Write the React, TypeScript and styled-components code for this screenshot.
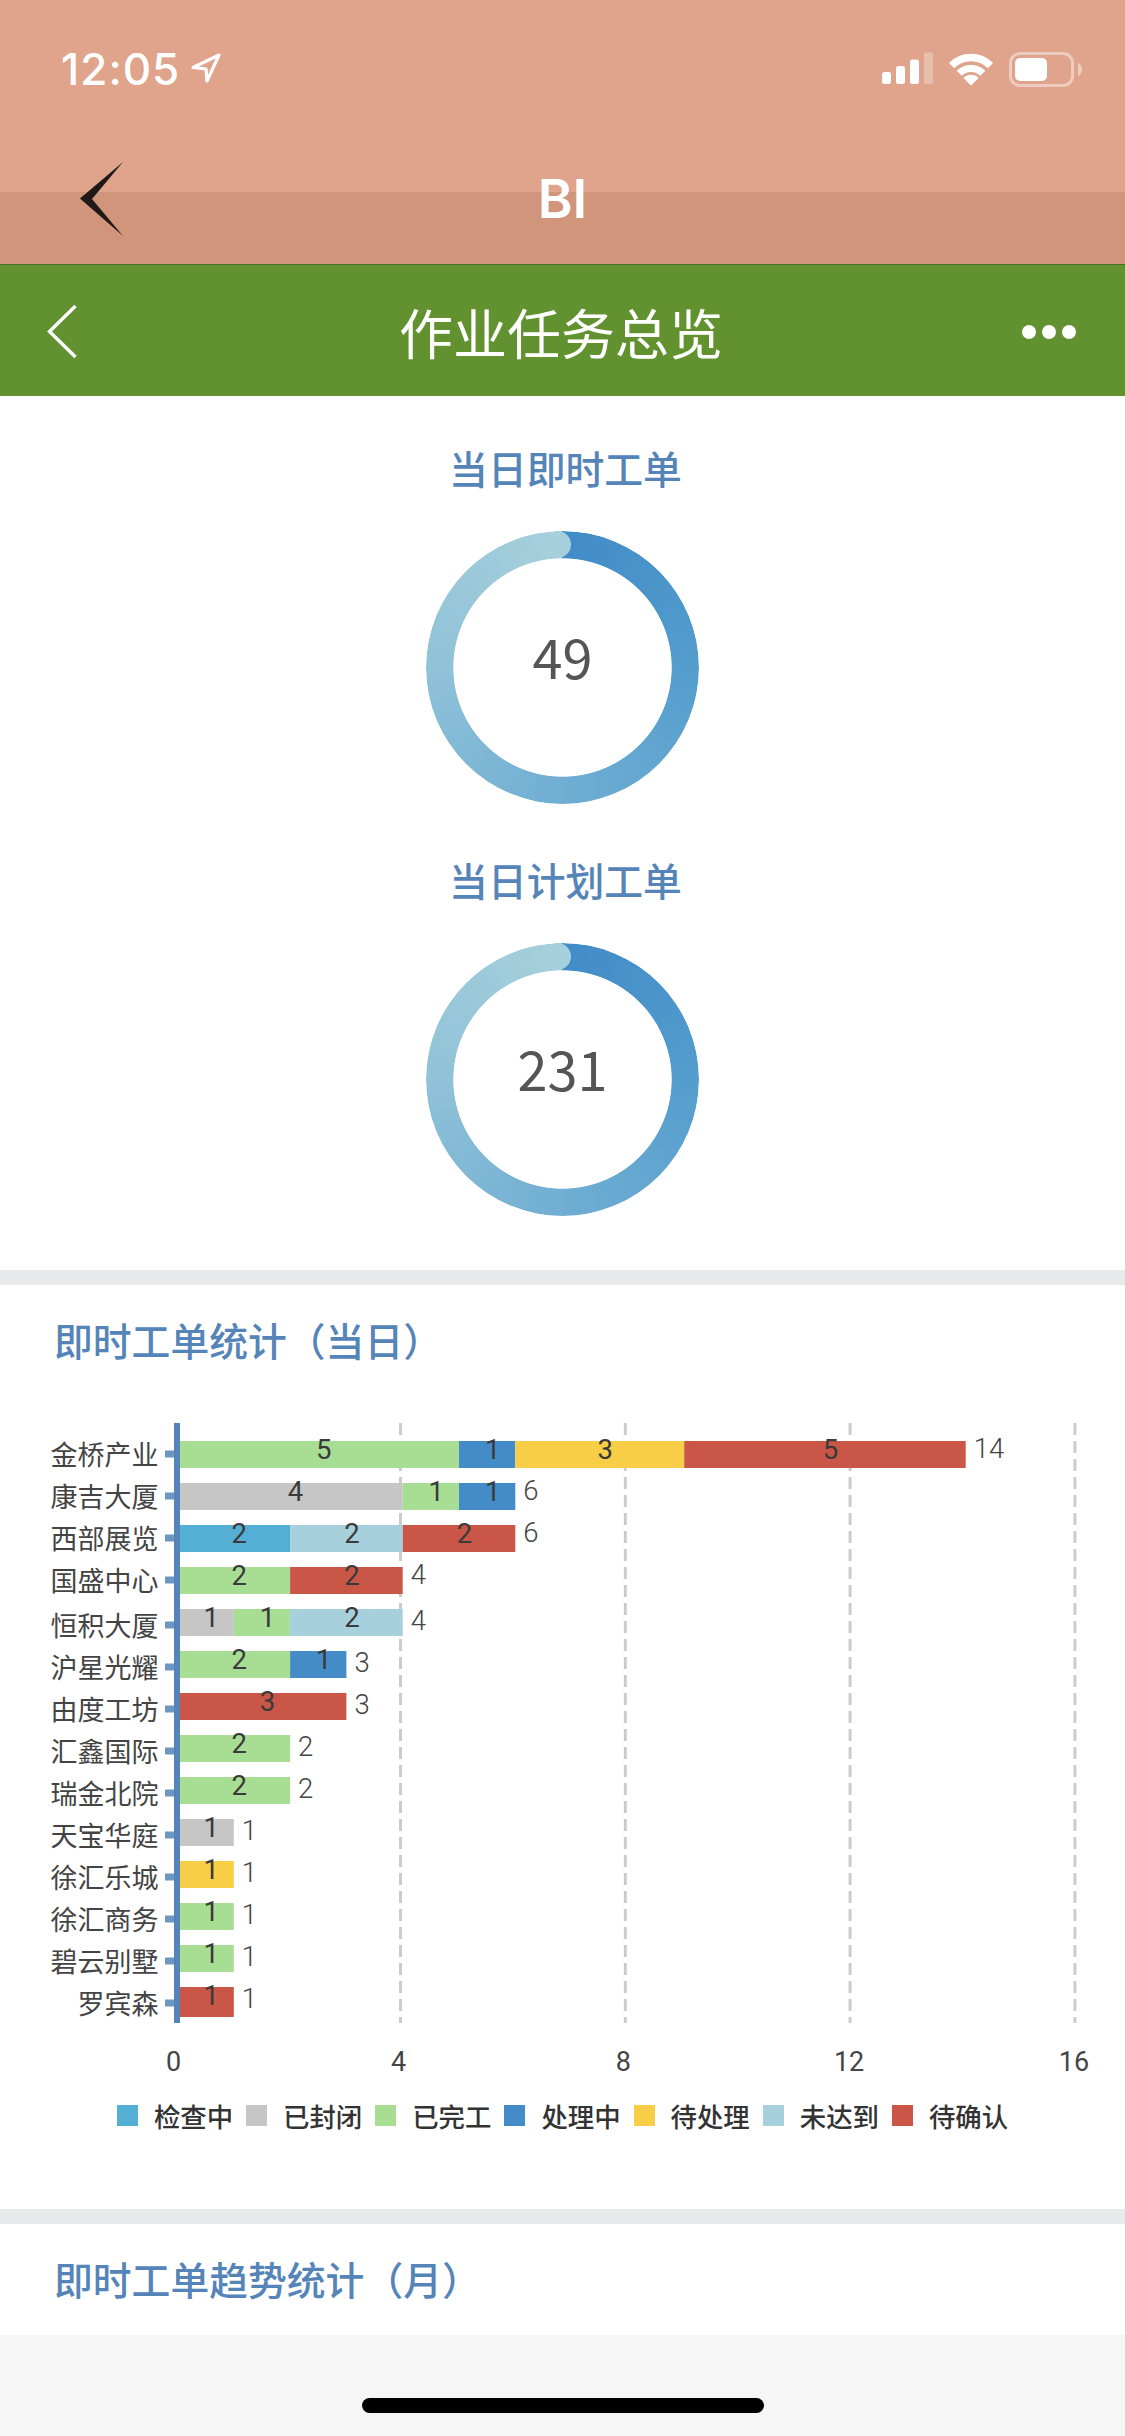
import React from 'react';
import styled, { createGlobalStyle } from 'styled-components';

const CJK = `"Noto Sans CJK SC", "Noto Sans", sans-serif`;
const LATIN = `Roboto, "Liberation Sans", sans-serif`;

const GlobalStyle = createGlobalStyle`
  html, body {
    margin: 0;
    padding: 0;
    background: #f6f6f6;
  }
  * {
    box-sizing: border-box;
  }
`;

const COLORS: Record<string, string> = {
  检查中: '#55aed4',
  已封闭: '#c6c6c6',
  已完工: '#a8de94',
  处理中: '#438cc8',
  待处理: '#f8ce46',
  未达到: '#a6d0dc',
  待确认: '#c95646',
};

type Row = { name: string; parts: [string, number][] };

const ROWS: Row[] = [
  { name: '金桥产业', parts: [['已完工', 5], ['处理中', 1], ['待处理', 3], ['待确认', 5]] },
  { name: '康吉大厦', parts: [['已封闭', 4], ['已完工', 1], ['处理中', 1]] },
  { name: '西部展览', parts: [['检查中', 2], ['未达到', 2], ['待确认', 2]] },
  { name: '国盛中心', parts: [['已完工', 2], ['待确认', 2]] },
  { name: '恒积大厦', parts: [['已封闭', 1], ['已完工', 1], ['未达到', 2]] },
  { name: '沪星光耀', parts: [['已完工', 2], ['处理中', 1]] },
  { name: '由度工坊', parts: [['待确认', 3]] },
  { name: '汇鑫国际', parts: [['已完工', 2]] },
  { name: '瑞金北院', parts: [['已完工', 2]] },
  { name: '天宝华庭', parts: [['已封闭', 1]] },
  { name: '徐汇乐城', parts: [['待处理', 1]] },
  { name: '徐汇商务', parts: [['已完工', 1]] },
  { name: '碧云别墅', parts: [['已完工', 1]] },
  { name: '罗宾森', parts: [['待确认', 1]] },
];

const barX = (v: number) => 177.5 + 56.3 * v;
const gridX = (v: number) => 175.7 + 56.2 * v;

const Page = styled.div`
  width: 1125px;
  min-height: 2436px;
  background: #f6f6f6;
  overflow: hidden;
`;

const TopBar = styled.header`
  height: 265px;
  background: linear-gradient(#dfa48b 192px, #d0957b 192px);
  border-bottom: 1px solid #4c6f28;
`;

const StatusRow = styled.div`
  display: flex;
  justify-content: space-between;
  align-items: flex-start;
  height: 162px;
  padding: 52px 43px 0 61px;
`;

const TimeBox = styled.div`
  display: flex;
  align-items: flex-start;
  gap: 10px;
`;

const Time = styled.span`
  font-family: Inter, "Liberation Sans", sans-serif;
  font-size: 44px;
  font-weight: 500;
  line-height: 34px;
  letter-spacing: 1px;
  color: #fff;
`;

const StatusIcons = styled.div`
  display: flex;
  align-items: flex-start;
  gap: 15px;
`;

const NavRow = styled.div`
  display: grid;
  grid-template-columns: 1fr auto 1fr;
  align-items: center;
  height: 74px;
  padding-left: 80px;
`;

const AppTitle = styled.span`
  font-family: Inter, "Liberation Sans", sans-serif;
  font-size: 53px;
  font-weight: 600;
  line-height: 74px;
  color: #fff;
  transform: translateX(-40px);
`;

const GreenBar = styled.div`
  display: grid;
  grid-template-columns: 1fr auto 1fr;
  align-items: center;
  height: 131px;
  padding: 2px 49px 0 46px;
  background: #62912f;
`;

const PageTitle = styled.h1`
  margin: 0;
  font-family: ${CJK};
  font-size: 54px;
  font-weight: 400;
  line-height: 1;
  color: #fff;
`;

const Dots = styled.div`
  display: flex;
  justify-content: flex-end;
  gap: 6px;
`;

const Dot = styled.span`
  width: 14px;
  height: 14px;
  border-radius: 50%;
  background: #fff;
`;

const Section = styled.section<{ $bottom: number }>`
  background: #fff;
  padding-bottom: ${(p) => p.$bottom}px;
`;

const Divider = styled.div`
  height: 15px;
  background: #e8e9eb;
`;

const DonutSection = styled.section`
  display: flex;
  flex-direction: column;
  align-items: center;
  padding: 45px 0 54px;
  background: #fff;
`;

const DonutTitle = styled.h2<{ $top?: number }>`
  margin: ${(p) => p.$top ?? 0}px 0 38px 6px;
  font-family: ${CJK};
  font-size: 38.8px;
  font-weight: 500;
  line-height: 52px;
  color: #5585b8;
`;

const Ring = styled.div`
  position: relative;
  display: flex;
  align-items: center;
  justify-content: center;
  width: 273px;
  height: 273px;

  &::before {
    content: '';
    position: absolute;
    inset: 0;
    border-radius: 50%;
    background: conic-gradient(#418bc8 0deg, #549dcd 90deg, #70aed3 180deg, #90c2d8 270deg, #a6d0dc 360deg);
    -webkit-mask: radial-gradient(circle closest-side, transparent 108.8px, #000 109.6px);
    mask: radial-gradient(circle closest-side, transparent 108.8px, #000 109.6px);
  }

  &::after {
    content: '';
    position: absolute;
    top: 0;
    left: 118px;
    width: 27px;
    height: 27px;
    border-radius: 50%;
    background: #a6d0dc;
  }
`;

const RingValue = styled.span`
  font-family: ${CJK};
  font-size: 54px;
  line-height: 1;
  color: #555;
  transform: translateY(-12px);
`;

const SectionTitle = styled.h2`
  margin: 0;
  padding: 28px 0 3px 54px;
  font-family: ${CJK};
  font-size: 38.8px;
  font-weight: 500;
  line-height: 52px;
  color: #5585b8;
`;

const ChartSvg = styled.svg`
  display: block;
  margin-top: 43px;
`;

const RowLabel = styled.text`
  font-family: ${CJK};
  font-size: 27px;
  fill: #444;
  text-anchor: end;
`;

const InnerValue = styled.text`
  font-family: ${LATIN};
  font-size: 27.5px;
  font-weight: 400;
  fill: #3a3a3a;
  text-anchor: middle;
`;

const OuterValue = styled.text`
  font-family: ${LATIN};
  font-size: 27.5px;
  font-weight: 300;
  fill: #444;
`;

const AxisValue = styled.text`
  font-family: ${LATIN};
  font-size: 27px;
  fill: #444;
  text-anchor: middle;
`;

const Legend = styled.div`
  display: flex;
  justify-content: center;
  gap: 13px;
  margin-top: 16px;
  padding-bottom: 2px;
`;

const LegendItem = styled.div`
  display: flex;
  align-items: center;
  gap: 16px;
  height: 36px;
  font-family: ${CJK};
  font-size: 26.4px;
  font-weight: 500;
  color: #333;
`;

const Swatch = styled.span<{ $color: string }>`
  width: 21px;
  height: 21px;
  background: ${(p) => p.$color};
`;

const Footer = styled.div`
  display: flex;
  justify-content: center;
  padding-top: 63px;
`;

const HomeBar = styled.div`
  width: 402px;
  height: 15px;
  border-radius: 8px;
  background: #000;
`;

const Arrow = () => (
  <svg width="32" height="32" viewBox="0 0 32 32" fill="none">
    <path d="M29 3 L3 15.5 L16 17 L17 29 Z" stroke="#fff" strokeWidth="3.2" strokeLinejoin="round" />
  </svg>
);

const Signal = () => (
  <svg width="51" height="33" viewBox="0 0 51 33" fill="#fff">
    <rect x="0" y="20" width="9" height="12" rx="2.5" />
    <rect x="14" y="14" width="9" height="18" rx="2.5" />
    <rect x="28" y="7.5" width="9" height="24.5" rx="2.5" />
    <rect x="42" y="0.5" width="9" height="31.5" rx="2.5" opacity="0.3" />
  </svg>
);

const Wifi = () => (
  <svg width="46" height="34" viewBox="0 0 46 34" fill="none">
    <path d="M3.6 13.6 A27.5 27.5 0 0 1 42.4 13.6" stroke="#fff" strokeWidth="7.5" />
    <path d="M11.2 21.3 A16.6 16.6 0 0 1 34.8 21.3" stroke="#fff" strokeWidth="7" />
    <path d="M23 33.5 L15.4 26 A10.8 10.8 0 0 1 30.6 26 Z" fill="#fff" />
  </svg>
);

const Battery = () => (
  <svg width="73" height="35" viewBox="0 0 73 35" fill="none">
    <rect x="1.5" y="1.5" width="62" height="32" rx="9.5" stroke="#fff" strokeOpacity="0.45" strokeWidth="3" />
    <rect x="6" y="6" width="32" height="23" rx="5" fill="#fff" />
    <path d="M69 11 C71.5 12 73 14.5 73 17.5 C73 20.5 71.5 23 69 24 Z" fill="#fff" fillOpacity="0.45" />
  </svg>
);

const BackDark = () => (
  <svg width="43" height="74" viewBox="0 0 43 74" fill="#1f1a18">
    <path d="M43 0 L0 36.5 L43 74 L12 37 Z" />
  </svg>
);

const BackWhite = () => (
  <svg width="32" height="56" viewBox="0 0 32 56" fill="none">
    <path d="M29.5 2 L3.5 27.5 L29.5 53" stroke="#fff" strokeWidth="3.4" />
  </svg>
);

const Donut = ({ title, value, top }: { title: string; value: number; top?: number }) => (
  <>
    <DonutTitle $top={top}>{title}</DonutTitle>
    <Ring>
      <RingValue>{value}</RingValue>
    </Ring>
  </>
);

const BarChart = () => (
  <ChartSvg width="1125" height="670" viewBox="0 1410 1125 670">
    {[4, 8, 12, 16].map((v) => (
      <line
        key={v}
        x1={gridX(v)}
        x2={gridX(v)}
        y1={1422}
        y2={2022}
        stroke="#ccc"
        strokeWidth="3"
        strokeDasharray="12 6"
      />
    ))}
    {ROWS.map((row, i) => {
      const barTop = 1440 + 42 * i;
      const barHeight = i === ROWS.length - 1 ? 30 : 27;
      const tickY = barTop + 13 + (i >= 4 ? 3 : 0);
      const total = row.parts.reduce((sum, p) => sum + p[1], 0);
      const outerCenter = barTop + (i >= 4 ? 11.5 : 8);
      let acc = 0;
      return (
        <g key={row.name}>
          <RowLabel x={158.5} y={tickY + 10.5}>
            {row.name}
          </RowLabel>
          <rect x={165} y={tickY - 3.5} width={10} height={7} fill="#6c97c4" />
          {row.parts.map(([status, count], k) => {
            const x0 = barX(acc);
            acc += count;
            const x1 = barX(acc);
            return (
              <g key={k}>
                <rect x={x0} y={barTop} width={x1 - x0} height={barHeight} fill={COLORS[status]} />
                <InnerValue x={(x0 + x1) / 2 + 5.5} y={barTop + 8.5 + 9.6}>
                  {count}
                </InnerValue>
              </g>
            );
          })}
          <OuterValue x={barX(total) + 8} y={outerCenter + 9}>
            {total}
          </OuterValue>
        </g>
      );
    })}
    <rect x={174} y={1422} width={6} height={600} fill="#5585b8" />
    {[0, 4, 8, 12, 16].map((v) => (
      <AxisValue key={v} x={gridX(v) - 2 + (v > 8 ? 1 : 0)} y={2070}>
        {v}
      </AxisValue>
    ))}
  </ChartSvg>
);

export default function App() {
  return (
    <Page>
      <GlobalStyle />
      <TopBar>
        <StatusRow>
          <TimeBox>
            <Time>12:05</Time>
            <Arrow />
          </TimeBox>
          <StatusIcons>
            <Signal />
            <Wifi />
            <Battery />
          </StatusIcons>
        </StatusRow>
        <NavRow>
          <BackDark />
          <AppTitle>BI</AppTitle>
        </NavRow>
      </TopBar>
      <GreenBar>
        <BackWhite />
        <PageTitle>作业任务总览</PageTitle>
        <Dots>
          <Dot />
          <Dot />
          <Dot />
        </Dots>
      </GreenBar>
      <DonutSection>
        <Donut title="当日即时工单" value={49} />
        <Donut title="当日计划工单" value={231} top={49} />
      </DonutSection>
      <Divider />
      <Section $bottom={74}>
        <SectionTitle>即时工单统计（当日）</SectionTitle>
        <BarChart />
        <Legend>
          {Object.keys(COLORS).map((name) => (
            <LegendItem key={name}>
              <Swatch $color={COLORS[name]} />
              {name}
            </LegendItem>
          ))}
        </Legend>
      </Section>
      <Divider />
      <Section $bottom={28}>
        <SectionTitle>即时工单趋势统计（月）</SectionTitle>
      </Section>
      <Footer>
        <HomeBar />
      </Footer>
    </Page>
  );
}
